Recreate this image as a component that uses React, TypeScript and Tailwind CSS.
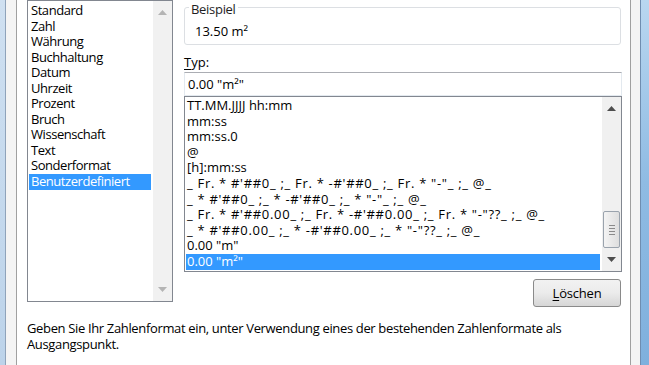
import React from "react";

const leftItems = [
  "Standard",
  "Zahl",
  "Währung",
  "Buchhaltung",
  "Datum",
  "Uhrzeit",
  "Prozent",
  "Bruch",
  "Wissenschaft",
  "Text",
  "Sonderformat",
  "Benutzerdefiniert",
];

const rightItems = [
  "TT.MM.JJJJ hh:mm",
  "mm:ss",
  "mm:ss.0",
  "@",
  "[h]:mm:ss",
  "_ Fr. * #'##0_ ;_ Fr. * -#'##0_ ;_ Fr. * \"-\"_ ;_ @_",
  "_ * #'##0_ ;_ * -#'##0_ ;_ * \"-\"_ ;_ @_",
  "_ Fr. * #'##0.00_ ;_ Fr. * -#'##0.00_ ;_ Fr. * \"-\"??_ ;_ @_",
  "_ * #'##0.00_ ;_ * -#'##0.00_ ;_ * \"-\"??_ ;_ @_",
  "0.00 \"m\"",
  "0.00 \"m²\"",
];

function UpArrow({ color }: { color: string }) {
  return (
    <svg width="9" height="5" viewBox="0 0 9 5">
      <path d="M4.5 0 L9 5 L0 5 Z" fill={color} />
    </svg>
  );
}
function DownArrow({ color }: { color: string }) {
  return (
    <svg width="9" height="5" viewBox="0 0 9 5">
      <path d="M0 0 L9 0 L4.5 5 Z" fill={color} />
    </svg>
  );
}

export default function App() {
  return (
    <div
      className="flex h-[365px] w-[649px] overflow-hidden bg-white text-[13px] text-black"
      style={{ fontFamily: '"Open Sans", "Noto Sans", sans-serif' }}
    >
      {/* window frame left */}
      <div className="w-[5px] bg-gradient-to-b from-[#cfe0f1] to-[#bcd3ea]" />
      <div className="w-px bg-[#8fa3ba]" />
      <div className="w-[10px] bg-[#f4f4f4]" />
      <div className="w-px bg-[#a0a0a0]" />

      {/* tab page */}
      <div className="flex w-[613px] flex-col bg-white pl-[10px] pr-[8px]">
        <div className="flex gap-[11px]">
          {/* left list */}
          <div className="flex h-[302px] w-[146px] border border-[#828790] bg-white">
            <div className="flex-1 pt-[2px] pl-px pr-[2px] tracking-[-0.45px]">
              {leftItems.map((t) => (
                <div
                  key={t}
                  className={
                    "h-[15.55px] pl-[2px] leading-[15.55px] whitespace-nowrap " +
                    (t === "Benutzerdefiniert" ? "bg-[#3399ff] text-white" : "")
                  }
                >
                  {t}
                </div>
              ))}
            </div>
            <div className="flex w-[19px] flex-col items-center justify-between bg-[#f1f1f1] py-[9px]">
              <UpArrow color="#b4b4b4" />
              <DownArrow color="#b4b4b4" />
            </div>
          </div>

          {/* right column */}
          <div className="flex w-[438px] flex-col">
            <div className="relative mt-[7px] h-[38px] w-[437px] rounded-[3px] border border-[#dcdfe3]">
              <span className="absolute -top-[7px] left-[4px] bg-white px-[2px] leading-[16px] tracking-[-0.3px] text-[#1e1e1e]">
                Beispiel
              </span>
              <div className="pt-[15px] pl-[10px] leading-[16px]">13.50 m²</div>
            </div>

            <div className="mt-[9px] leading-[16px]">
              <span className="underline underline-offset-2">T</span>yp:
            </div>

            <div className="mt-[2px] h-[24px] border border-[#e3e9ef] border-t-[#abadb3] pl-[3px] leading-[22px]">
              0.00 "m²"
            </div>

            <div className="flex h-[176px] border border-[#828790] bg-white">
              <div className="flex-1 pt-px pl-px pr-[2px]">
                {rightItems.map((t, i) => (
                  <div
                    key={i}
                    className={
                      "h-[15.6px] pl-[1px] leading-[15.6px] whitespace-nowrap " +
                      (i >= 5 && i <= 8 ? "tracking-[0.7px] " : "") +
                      (i === rightItems.length - 1 ? "bg-[#3399ff] text-white" : "")
                    }
                  >
                    {t}
                  </div>
                ))}
              </div>
              <div className="flex w-[19px] flex-col items-center bg-[#f0f0f0] pt-[9px] pb-[9px]">
                <UpArrow color="#4d4d4d" />
                <div className="flex-1" />
                <div className="mb-[9px] flex h-[37px] w-[17px] flex-col items-center justify-center gap-[2px] rounded-[2px] border border-[#9aa3ad] bg-gradient-to-r from-[#f4f4f4] to-[#dedede]">
                  <div className="h-px w-[6px] bg-[#8a8a8a]" />
                  <div className="h-px w-[6px] bg-[#8a8a8a]" />
                  <div className="h-px w-[6px] bg-[#8a8a8a]" />
                  <div className="h-px w-[6px] bg-[#8a8a8a]" />
                </div>
                <DownArrow color="#4d4d4d" />
              </div>
            </div>

            <div className="mt-[7px] flex justify-end pr-px">
              <button className="h-[28px] w-[88px] rounded-[3px] border border-[#8a8a8a] bg-gradient-to-b from-[#f2f2f2] via-[#ebebeb] to-[#d6d6d6] leading-[26px] tracking-[-0.2px] text-black">
                <span className="underline underline-offset-2">L</span>öschen
              </button>
            </div>
          </div>
        </div>

        <div className="mt-[13px] leading-[16px] tracking-[-0.35px]">
          Geben Sie Ihr Zahlenformat ein, unter Verwendung eines der bestehenden Zahlenformate als
          <br />
          Ausgangspunkt.
        </div>
      </div>

      {/* window frame right */}
      <div className="w-px bg-[#a0a0a0]" />
      <div className="w-[9px] bg-[#f4f4f4]" />
      <div className="w-px bg-[#6f8db0]" />
      <div className="w-[8px] bg-gradient-to-b from-[#b9d7f0] via-[#8fbbe3] to-[#7fb0dd]" />
    </div>
  );
}
